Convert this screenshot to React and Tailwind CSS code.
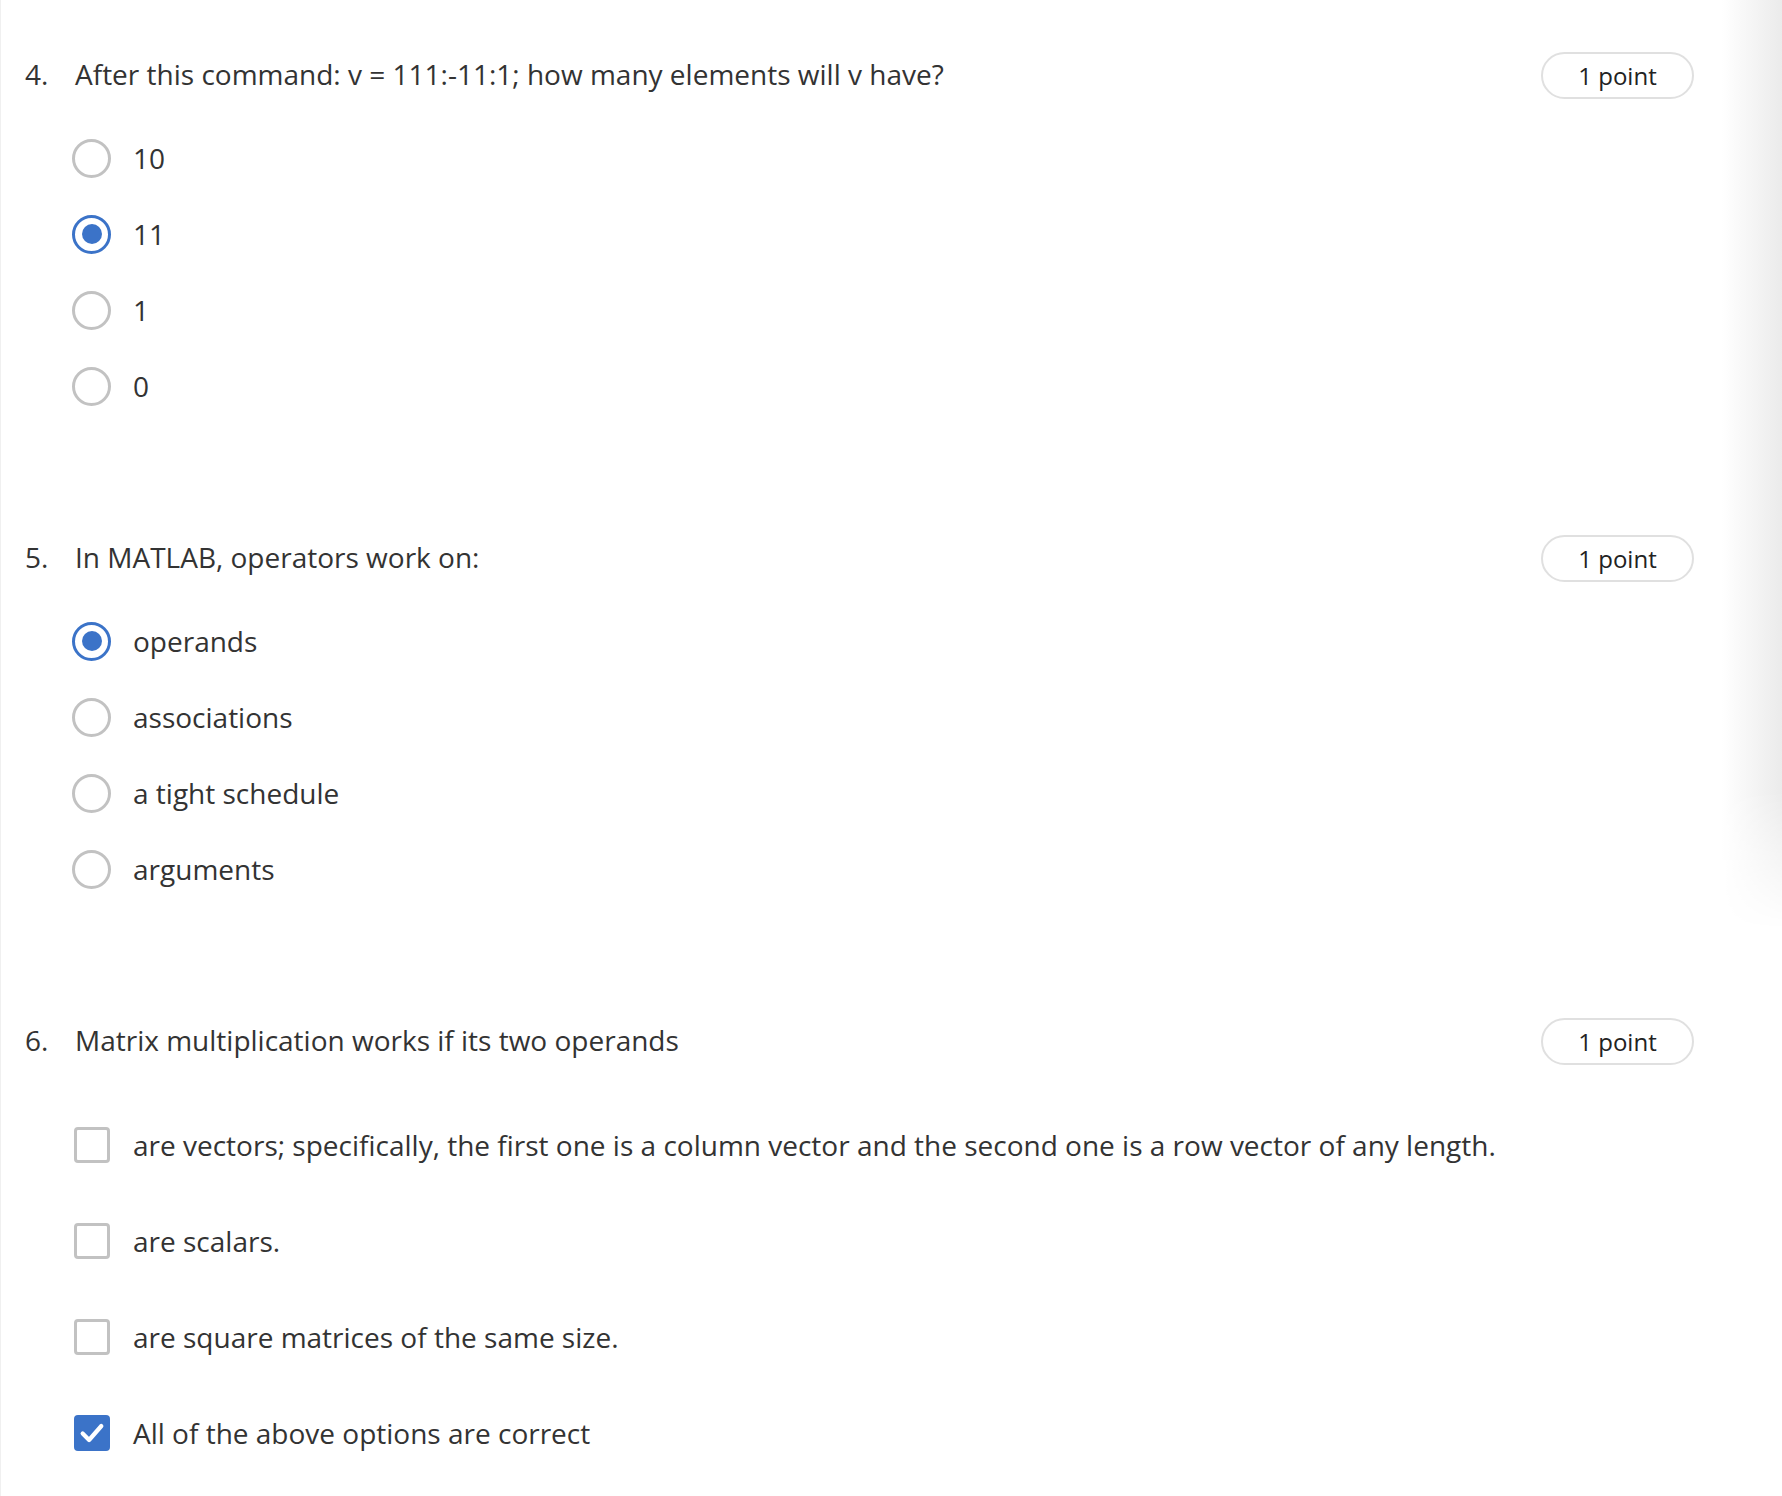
const questions = [
  {
    num: '4.',
    title: 'After this command: v = 111:-11:1; how many elements will v have?',
    type: 'radio',
    options: ['10', '11', '1', '0'],
    selected: [1],
  },
  {
    num: '5.',
    title: 'In MATLAB, operators work on:',
    type: 'radio',
    options: ['operands', 'associations', 'a tight schedule', 'arguments'],
    selected: [0],
  },
  {
    num: '6.',
    title: 'Matrix multiplication works if its two operands',
    type: 'checkbox',
    options: [
      'are vectors; specifically, the first one is a column vector and the second one is a row vector of any length.',
      'are scalars.',
      'are square matrices of the same size.',
      'All of the above options are correct',
    ],
    selected: [3],
  },
];

const Radio = ({ checked }) =>
  checked ? (
    <span className="flex h-[39px] w-[39px] shrink-0 items-center justify-center rounded-full border-[3.5px] border-[#3b73c8]">
      <span className="h-[20px] w-[20px] rounded-full bg-[#3b73c8]" />
    </span>
  ) : (
    <span className="h-[39px] w-[39px] shrink-0 rounded-full border-[3.5px] border-[#c2c2c2]" />
  );

const Checkbox = ({ checked }) =>
  checked ? (
    <span className="ml-[2px] flex h-[36px] w-[36px] shrink-0 items-center justify-center rounded-[4px] bg-[#3b73c8]">
      <svg viewBox="0 0 24 24" className="h-[28px] w-[28px]" fill="none" stroke="white" strokeWidth="3.6" strokeLinecap="round" strokeLinejoin="round">
        <polyline points="4,12.5 9.5,18 20,6" />
      </svg>
    </span>
  ) : (
    <span className="ml-[2px] h-[36px] w-[36px] shrink-0 rounded-[4px] border-[3px] border-[#c2c2c2]" />
  );

const Question = ({ q, last }) => {
  const isRadio = q.type === 'radio';
  return (
    <div className={last ? '' : 'mb-[111px]'}>
      <div className="flex h-[47px] items-center">
        <span className="w-[50px] shrink-0 pb-[3px]">{q.num}</span>
        <span className="flex-1 pb-[3px]">{q.title}</span>
        <span className="flex h-[47px] w-[153px] items-center justify-center rounded-full border-2 border-[#e0e0e0] pt-[1px] text-[24px] text-[#222]">
          1 point
        </span>
      </div>
      <div className={isRadio ? 'mt-[21px] pl-[47px]' : 'mt-[32px] pl-[47px]'}>
        {q.options.map((opt, i) => (
          <div
            key={opt}
            className={`flex items-center ${isRadio ? 'h-[76px] gap-[22px]' : 'h-[96px] gap-[23px]'}`}
          >
            {isRadio ? (
              <Radio checked={q.selected.includes(i)} />
            ) : (
              <Checkbox checked={q.selected.includes(i)} />
            )}
            <span>{opt}</span>
          </div>
        ))}
      </div>
    </div>
  );
};

export default function App() {
  return (
    <div className="flex min-h-[1496px] w-full bg-white font-['Open_Sans',sans-serif] text-[28px] text-[#333]">
      <div className="flex-1 border-l border-[#f0f0f0] pl-[24px] pr-[28px] pt-[52px]">
        {questions.map((q, i) => (
          <Question key={q.num} q={q} last={i === questions.length - 1} />
        ))}
      </div>
      <div className="w-[60px] shrink-0">
        <div className="h-[930px] bg-[linear-gradient(to_right,#ffffff,#ebebeb)] [mask-image:linear-gradient(to_bottom,black_85%,transparent)]" />
      </div>
    </div>
  );
}
